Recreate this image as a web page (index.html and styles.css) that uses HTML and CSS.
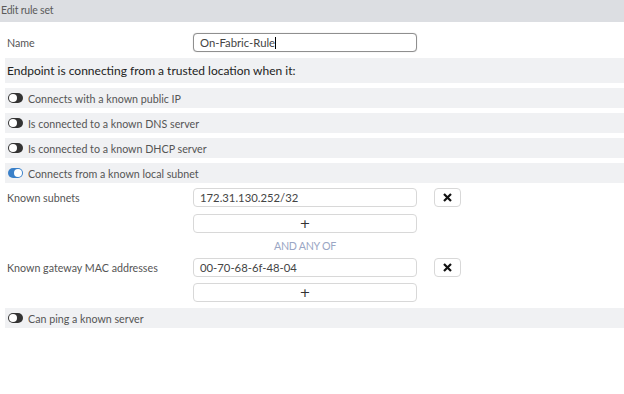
FILE: index.html
```html
<!DOCTYPE html>
<html lang="en">

<head>
    <meta charset="UTF-8">
    <title>Edit rule set</title>
    <link rel="stylesheet" href="styles.css">
</head>

<body>
    <div class="title">Edit rule set</div>
    <div class="form">
        <div class="row name-row">
            <label class="label">Name</label>
            <div class="input dark">On-Fabric-Rule<span class="caret"></span></div>
        </div>
        <div class="band heading">Endpoint is connecting from a trusted location when it:</div>

        <div class="band toggle-row"><span class="toggle"></span>Connects with a known public IP</div>
        <div class="band toggle-row"><span class="toggle"></span>Is connected to a known DNS server</div>
        <div class="band toggle-row"><span class="toggle"></span>Is connected to a known DHCP server</div>
        <div class="band toggle-row"><span class="toggle on"></span>Connects from a known local subnet</div>

        <div class="list">
            <div class="row item">
                <label class="label">Known subnets</label>
                <div class="input">172.31.130.252/32</div>
                <button class="remove">
                    <svg width="9" height="9" viewBox="0 0 9 9"><path d="M1 1L8 8M8 1L1 8" stroke="#111" stroke-width="2.2"/></svg>
                </button>
            </div>
            <div class="row add-row">
                <span class="label"></span>
                <button class="add">+</button>
            </div>
            <div class="row any-row">
                <span class="label"></span>
                <span class="any">AND ANY OF</span>
            </div>
            <div class="row item">
                <label class="label">Known gateway MAC addresses</label>
                <div class="input">00-70-68-6f-48-04</div>
                <button class="remove">
                    <svg width="9" height="9" viewBox="0 0 9 9"><path d="M1 1L8 8M8 1L1 8" stroke="#111" stroke-width="2.2"/></svg>
                </button>
            </div>
            <div class="row add-row last">
                <span class="label"></span>
                <button class="add">+</button>
            </div>
        </div>

        <div class="band toggle-row"><span class="toggle"></span>Can ping a known server</div>
    </div>
</body>

</html>
```

FILE: styles.css
```css
* {
    margin: 0;
    padding: 0;
    box-sizing: border-box;
}

body {
    font-family: Lato, "Open Sans", sans-serif;
    font-size: 10.7px;
    color: #555;
    background: #fff;
}

.title {
    height: 22px;
    line-height: 20px;
    padding-left: 1px;
    background: #dcdee2;
    color: #5a5a5a;
    font-size: 10.5px;
    letter-spacing: -0.2px;
}

.form {
    padding-left: 5px;
}

.row {
    display: flex;
    align-items: center;
}

.label {
    width: 188px;
    padding-left: 2px;
    flex-shrink: 0;
}

.name-row {
    height: 36px;
    padding-top: 5px;
}

.input {
    width: 224px;
    height: 19px;
    line-height: 17px;
    padding-left: 6px;
    border: 1px solid #d8d8d8;
    border-radius: 4px;
    font-size: 11.3px;
    color: #444;
    background: #fff;
}

.input.dark {
    border-color: #8f8f8f;
    box-shadow: 0 0 1px #bbb;
}

.caret {
    display: inline-block;
    width: 1px;
    height: 12px;
    background: #000;
    vertical-align: -2px;
}

.band {
    display: flex;
    align-items: center;
    background: #f0f1f3;
    padding-left: 2px;
}

.heading {
    height: 25px;
    font-size: 12px;
    color: #222;
    margin-bottom: 5px;
}

.toggle-row {
    height: 20px;
    margin-bottom: 5px;
}

.toggle {
    position: relative;
    display: inline-block;
    width: 15px;
    height: 10px;
    border-radius: 5px;
    background: #333;
    margin: 0 5px 0 1px;
}

.toggle::after {
    content: "";
    position: absolute;
    left: 1px;
    top: 1px;
    width: 8px;
    height: 8px;
    border-radius: 50%;
    background: #fff;
}

.toggle.on {
    background: #3a80c9;
}

.toggle.on::after {
    left: 6px;
}

.item {
    height: 19px;
}

.remove {
    display: flex;
    align-items: center;
    justify-content: center;
    width: 27px;
    height: 19px;
    margin-left: 17px;
    border: 1px solid #d8d8d8;
    border-radius: 4px;
    background: #fff;
}

.add-row {
    margin-top: 7px;
    margin-bottom: 5px;
}

.add-row.last {
    margin-top: 6px;
    margin-bottom: 6px;
}

.add {
    width: 224px;
    height: 19px;
    border: 1px solid #d8d8d8;
    border-radius: 4px;
    background: #fff;
    font-family: "DejaVu Sans", sans-serif;
    font-size: 13px;
    line-height: 15px;
    color: #333;
}

.any-row {
    height: 20px;
    padding-bottom: 5px;
}

.any {
    width: 224px;
    text-align: center;
    color: #9aa6c4;
    letter-spacing: -0.3px;
}
```
